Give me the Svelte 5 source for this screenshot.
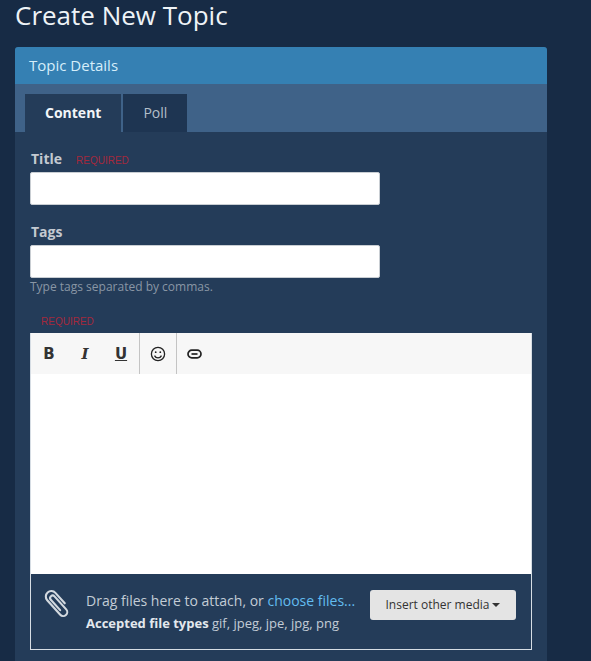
<script>
    let tabs = ["Content", "Poll"]
    let active = "Content"
</script>

<div class="page">
    <h1>Create New Topic</h1>

    <div class="card">
        <div class="card-header">Topic Details</div>

        <div class="tab-bar">
            {#each tabs as tab}
                <div class="tab" class:active={tab === active}>{tab}</div>
            {/each}
        </div>

        <div class="form">
            <div class="label-row">
                <span class="label">Title</span>
                <span class="required">REQUIRED</span>
            </div>
            <input class="text-input" type="text" />

            <div class="label-row">
                <span class="label">Tags</span>
            </div>
            <input class="text-input" type="text" />
            <div class="help">Type tags separated by commas.</div>

            <div class="required editor-required">REQUIRED</div>

            <div class="editor">
                <div class="toolbar">
                    <div class="tool-group first">
                        <span class="tool bold">B</span>
                        <span class="tool italic">I</span>
                        <span class="tool underline">U</span>
                    </div>
                    <div class="tool-group">
                        <svg width="16" height="16" viewBox="0 0 16 16" fill="none" stroke="#222" stroke-width="1.3">
                            <circle cx="8" cy="8" r="6.6" />
                            <circle cx="5.7" cy="6.2" r="0.9" fill="#222" stroke="none" />
                            <circle cx="10.3" cy="6.2" r="0.9" fill="#222" stroke="none" />
                            <path d="M4.5 9.6c.8 1.6 2 2.3 3.5 2.3s2.7-.7 3.5-2.3" />
                        </svg>
                    </div>
                    <div class="tool-group">
                        <svg width="15" height="10" viewBox="0 0 15 10" fill="none" stroke="#222" stroke-width="1.7">
                            <rect x="1" y="1.2" width="13" height="7.6" rx="3.8" />
                            <path d="M4.5 5h6" />
                        </svg>
                    </div>
                </div>
                <div class="editor-body"></div>
                <div class="upload">
                    <svg class="clip" width="28" height="30" viewBox="0 0 28 30" fill="none" stroke="#d3d9df" stroke-width="2.1" stroke-linecap="round">
                        <path transform="translate(7 -1) rotate(138 7 16)" d="M9.5 10V24a2.5 2.5 0 0 1-5 0V6.500a4 4 0 0 1 8 0V26a5.500 5.500 0 0 1-11 0V12" />
                    </svg>
                    <div class="upload-text">
                        <div class="drag">Drag files here to attach, or <span class="choose">choose files...</span></div>
                        <div class="accepted"><b>Accepted file types</b> gif, jpeg, jpe, jpg, png</div>
                    </div>
                    <button class="media-btn">Insert other media<span class="caret"></span></button>
                </div>
            </div>
        </div>
    </div>
</div>

<style>
    :global(body){
        background-color: #172b45;
        font-family: "Open Sans", sans-serif;
        overflow: hidden;
    }

    .page{
        height: 661px;
        overflow: hidden;
        padding: 0 44px 0 15px;
    }

    h1{
        margin: 0;
        height: 47px;
        font-size: 26px;
        line-height: 30px;
        font-weight: 400;
        color: #eef3f7;
    }

    /* CARD */

    .card{
        background-color: #243c59;
        border-radius: 3px 3px 0 0;
        height: 620px;
    }
    .card-header{
        height: 37px;
        line-height: 37px;
        padding-left: 14px;
        background-color: #3580b3;
        border-radius: 3px 3px 0 0;
        color: #d5eefa;
        font-size: 15px;
    }

    /* TABS */

    .tab-bar{
        height: 48px;
        box-sizing: border-box;
        padding: 10px 0 0 10px;
        display: flex;
        gap: 2px;
        background-color: #3f6288;
    }
    .tab{
        height: 38px;
        line-height: 38px;
        padding: 0 20px;
        font-size: 14px;
        color: #b4bfca;
        background-color: #1e3552;
    }
    .tab.active{
        font-weight: 700;
        color: #f2f5f8;
        background-color: #243c59;
    }

    /* FORM */

    .form{
        padding: 0 15px;
    }
    .label-row{
        display: flex;
        align-items: baseline;
        gap: 14px;
        height: 40px;
        padding-top: 18px;
        box-sizing: border-box;
        line-height: 18px;
    }
    .label{
        font-size: 14px;
        font-weight: 700;
        color: #c3c9d1;
        padding-left: 1px;
    }
    .required{
        font-family: "Liberation Sans", Arial, sans-serif;
        font-size: 10px;
        color: #a3293d;
    }
    .text-input{
        display: block;
        width: 350px;
        height: 33px;
        box-sizing: border-box;
        background-color: #fff;
        border: 1px solid #c9ced3;
        border-radius: 2px;
        padding: 0;
    }
    .help{
        height: 20px;
        line-height: 17px;
        font-size: 12px;
        color: #8996a5;
    }
    .editor-required{
        margin-top: 16px;
        padding-left: 11px;
        height: 19px;
        line-height: 16px;
    }

    /* EDITOR */

    .editor{
        width: 502px;
        box-sizing: border-box;
        border: 1px solid #d6dde4;
        border-top: none;
    }
    .toolbar{
        height: 41px;
        display: flex;
        background-color: #f7f7f7;
        color: #333;
    }
    .tool-group{
        height: 41px;
        display: flex;
        align-items: center;
        padding: 0 10px;
        border-right: 1px solid #c4c4c4;
    }
    .tool-group:last-child{
        border-right: none;
    }
    .tool-group.first{
        padding: 0;
        width: 108px;
    }
    .tool{
        width: 36px;
        text-align: center;
        font-family: "DejaVu Sans", sans-serif;
        font-size: 15px;
        font-weight: 700;
    }
    .italic{
        font-family: "DejaVu Serif", serif;
        font-style: italic;
    }
    .underline{
        text-decoration: underline;
    }
    .editor-body{
        height: 200px;
        background-color: #fff;
    }

    /* UPLOAD */

    .upload{
        height: 75px;
        box-sizing: border-box;
        padding: 0 15px 0 13px;
        display: flex;
        align-items: center;
    }
    .clip{
        flex: none;
        margin-bottom: 15px;
    }
    .upload-text{
        flex: 1;
        padding: 2px 0 0 14px;
        color: #c3ccd6;
    }
    .drag{
        font-size: 14px;
        line-height: 20px;
    }
    .choose{
        color: #63bdf0;
    }
    .accepted{
        font-size: 13px;
        line-height: 24px;
    }
    .accepted b{
        color: #e3e8ed;
    }
    .media-btn{
        width: 146px;
        height: 30px;
        margin-bottom: 14px;
        border: none;
        border-radius: 3px;
        background-color: #e4e4e4;
        color: #333;
        font-family: "Open Sans", sans-serif;
        font-size: 12px;
        padding: 0;
    }
    .caret{
        display: inline-block;
        margin-left: 3px;
        vertical-align: 2px;
        border-top: 4px solid #333;
        border-left: 4px solid transparent;
        border-right: 4px solid transparent;
    }
</style>
